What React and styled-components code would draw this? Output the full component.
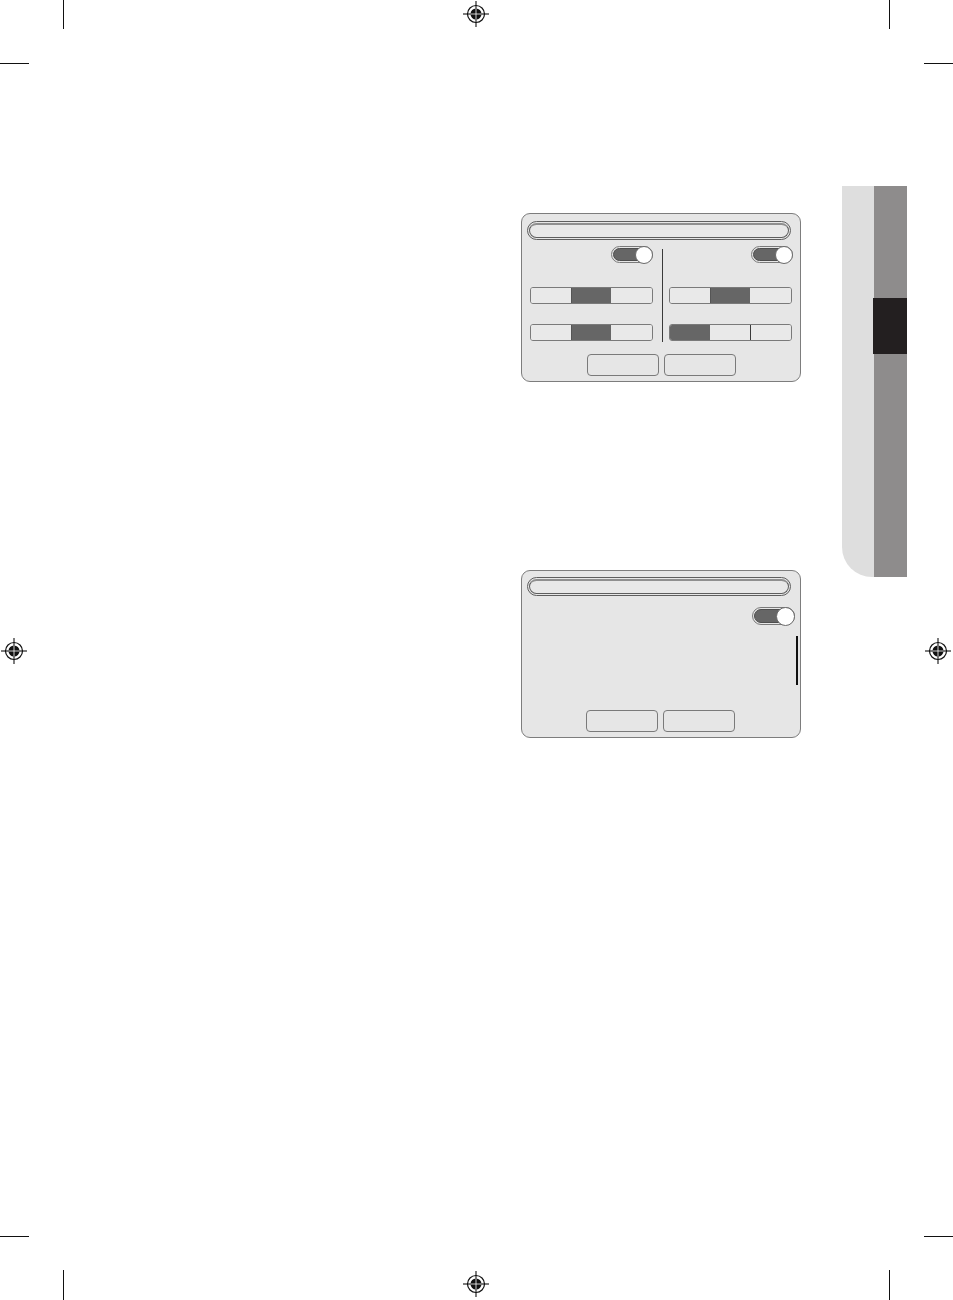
import React from "react";
import styled, { createGlobalStyle } from "styled-components";

const Global = createGlobalStyle`
  html, body { margin: 0; padding: 0; background: #fff; }
  body { font-family: "Liberation Sans", Arial, sans-serif; }
  * { box-sizing: border-box; }
`;

const Page = styled.div`
  position: relative;
  width: 953px;
  height: 1300px;
  overflow: hidden;
  background: #fff;
`;

const Sheet = styled.div`
  display: flex;
  padding-top: 186px;
`;

const Main = styled.div`
  width: 842px;
  padding: 27px 0 0 521px;
  display: flex;
  flex-direction: column;
  gap: 188px;
`;

const Panel = styled.div`
  width: 280px;
  height: ${(p) => p.$h}px;
  background: #e6e6e6;
  border: 1px solid #7d7d7d;
  border-radius: 9px;
  display: flex;
  flex-direction: column;
  padding: ${(p) => p.$pt}px 8px 0 5px;
`;

const TitleOuter = styled.div`
  width: 264px;
  height: 19px;
  border: 1px solid #5e5e5e;
  border-radius: 10px;
  padding: 1px;
  flex-shrink: 0;
`;

const TitleInner = styled.div`
  height: 100%;
  border: 1px solid #5e5e5e;
  border-top: 2px solid #8f8f8f;
  border-radius: 8px;
  background: #e8e8e8;
`;

const Body = styled.div`
  display: flex;
  margin-top: 6px;
`;

const Column = styled.div`
  width: 123px;
  flex-shrink: 0;
  margin-left: ${(p) => p.$ml || 0}px;
  display: flex;
  flex-direction: column;
  align-items: flex-end;
`;

const Divider = styled.div`
  width: 1px;
  flex-shrink: 0;
  height: 93px;
  margin: 3px 6px 0 9px;
  background: #3a3a3a;
`;

const Toggle = styled.div`
  position: relative;
  width: ${(p) => p.$w || 42}px;
  height: ${(p) => p.$hh || 17}px;
  border: 1px solid #7a7a7a;
  border-radius: 10px;
  padding: 1px;
  background: #e6e6e6;
  margin-right: ${(p) => p.$mr || 0}px;
  flex-shrink: 0;
`;

const Track = styled.div`
  height: 100%;
  border: 1px solid #4e4e4e;
  border-radius: 8px;
  background: #666666;
`;

const Knob = styled.div`
  position: absolute;
  right: -1px;
  top: -1px;
  width: ${(p) => p.$s}px;
  height: ${(p) => p.$s}px;
  border-radius: 50%;
  background: #fff;
  border: 1px solid #6a6a6a;
`;

const SegRow = styled.div`
  width: 123px;
  height: 17px;
  margin-top: ${(p) => p.$mt}px;
  display: flex;
  border: 1px solid #7a7a7a;
  border-radius: 3px;
  overflow: hidden;
  background: #e9e9e9;
`;

const Seg = styled.div`
  flex: 1;
  background: ${(p) => (p.$on ? "#666666" : "#e9e9e9")};
  border-left: 1px solid ${(p) => (p.$line ? "#3a3a3a" : p.$on ? "#555" : "transparent")};
  &:first-child { border-left: none; }
`;

const Buttons = styled.div`
  display: flex;
  justify-content: center;
  gap: 5px;
  margin-top: ${(p) => p.$mt}px;
  padding-left: ${(p) => p.$pl || 0}px;
`;

const Button = styled.div`
  width: 72px;
  height: 22px;
  border: 1px solid #7a7a7a;
  border-radius: 4px;
  background: #e6e6e6;
`;

const RightStack = styled.div`
  display: flex;
  flex-direction: column;
  align-items: flex-end;
  margin-top: 11px;
  margin-right: -6px;
`;

const ScrollBar = styled.div`
  width: 2px;
  height: 49px;
  background: #111;
  margin-top: 11px;
`;

const SideTab = styled.div`
  display: flex;
  height: 391px;
`;

const TabLight = styled.div`
  width: 32px;
  background: #dedede;
  border-bottom-left-radius: 30px;
`;

const TabDark = styled.div`
  width: 33px;
  background: #8e8c8c;
  display: flex;
  flex-direction: column;
`;

const TabBlock = styled.div`
  margin-top: 112px;
  margin-left: -1px;
  height: 56px;
  background: #231f20;
`;

const Line = styled.div`
  position: absolute;
  background: #111;
  left: ${(p) => p.$x}px;
  top: ${(p) => p.$y}px;
  width: ${(p) => p.$w}px;
  height: ${(p) => p.$h}px;
`;

const MarkWrap = styled.div`
  position: absolute;
  left: ${(p) => p.$x - 14}px;
  top: ${(p) => p.$y - 14}px;
  width: 28px;
  height: 28px;
`;

function RegMark({ x, y }) {
  return (
    <MarkWrap $x={x} $y={y}>
      <svg width="28" height="28" viewBox="-14 -14 28 28">
        <circle cx="0" cy="0" r="8.5" fill="none" stroke="#111" strokeWidth="1.2" />
        <circle cx="0" cy="0" r="5.5" fill="#111" />
        <line x1="-13" y1="0" x2="13" y2="0" stroke="#111" strokeWidth="1.1" />
        <line x1="0" y1="-13" x2="0" y2="13" stroke="#111" strokeWidth="1.1" />
        <line x1="-5.5" y1="0" x2="5.5" y2="0" stroke="#fff" strokeWidth="0.8" />
        <line x1="0" y1="-5.5" x2="0" y2="5.5" stroke="#fff" strokeWidth="0.8" />
      </svg>
    </MarkWrap>
  );
}

function Switch({ w, h, knob, mr }) {
  return (
    <Toggle $w={w} $hh={h} $mr={mr}>
      <Track />
      <Knob $s={knob} />
    </Toggle>
  );
}

function Segments({ active, mt, line }) {
  return (
    <SegRow $mt={mt}>
      {[0, 1, 2].map((i) => (
        <Seg key={i} $on={i === active} $line={line === i} />
      ))}
    </SegRow>
  );
}

export default function App() {
  return (
    <>
      <Global />
      <Page>
        <Sheet>
          <Main>
            <Panel $h={169} $pt={7}>
              <TitleOuter>
                <TitleInner />
              </TitleOuter>
              <Body>
                <Column $ml={3}>
                  <Switch w={42} h={17} knob={18} />
                  <Segments active={1} mt={24} />
                  <Segments active={1} mt={20} />
                </Column>
                <Divider />
                <Column>
                  <Switch w={42} h={17} knob={18} mr={-1} />
                  <Segments active={1} mt={24} />
                  <Segments active={0} mt={20} line={2} />
                </Column>
              </Body>
              <Buttons $mt={12} $pl={3}>
                <Button />
                <Button />
              </Buttons>
            </Panel>
            <Panel $h={168} $pt={6}>
              <TitleOuter>
                <TitleInner />
              </TitleOuter>
              <RightStack>
                <Switch w={43} h={18} knob={19} mr={3} />
                <ScrollBar />
              </RightStack>
              <Buttons $mt={25} $pl={1}>
                <Button />
                <Button />
              </Buttons>
            </Panel>
          </Main>
          <SideTab>
            <TabLight />
            <TabDark>
              <TabBlock />
            </TabDark>
          </SideTab>
        </Sheet>

        <Line $x={63} $y={0} $w={1} $h={29} />
        <Line $x={0} $y={63} $w={29} $h={1} />
        <Line $x={889} $y={0} $w={1} $h={29} />
        <Line $x={924} $y={63} $w={29} $h={1} />
        <Line $x={0} $y={1236} $w={29} $h={1} />
        <Line $x={63} $y={1270} $w={1} $h={30} />
        <Line $x={924} $y={1236} $w={29} $h={1} />
        <Line $x={889} $y={1270} $w={1} $h={30} />

        <RegMark x={476} y={14} />
        <RegMark x={476} y={1284} />
        <RegMark x={14} y={651} />
        <RegMark x={938} y={651} />
      </Page>
    </>
  );
}
